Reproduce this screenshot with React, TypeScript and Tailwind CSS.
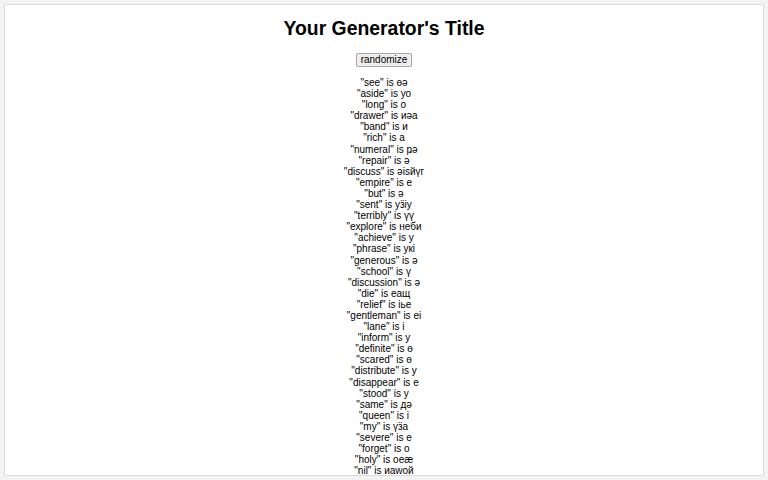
import React from "react";

const items: [string, string][] = [
  ["see", "өә"],
  ["aside", "уо"],
  ["long", "о"],
  ["drawer", "иәа"],
  ["band", "и"],
  ["rich", "a"],
  ["numeral", "ҏә"],
  ["repair", "ә"],
  ["discuss", "әisйүг"],
  ["empire", "е"],
  ["but", "ә"],
  ["sent", "уӟiу"],
  ["terribly", "үү"],
  ["explore", "нeби"],
  ["achieve", "у"],
  ["phrase", "укі"],
  ["generous", "ә"],
  ["school", "ү"],
  ["discussion", "ә"],
  ["die", "eaщ"],
  ["relief", "iье"],
  ["gentleman", "ei"],
  ["lane", "i"],
  ["inform", "у"],
  ["definite", "ө"],
  ["scared", "ө"],
  ["distribute", "у"],
  ["disappear", "е"],
  ["stood", "у"],
  ["same", "дә"],
  ["queen", "i"],
  ["my", "үӟа"],
  ["severe", "е"],
  ["forget", "о"],
  ["holy", "оеæ"],
  ["nil", "иawой"],
];

export default function App() {
  return (
    <div
      className="h-[480px] w-[768px] bg-[#f3f3f3] pt-[4px] pl-[4px] pr-[4px] pb-[4px]"
      style={{ fontFamily: '"Liberation Sans", Arial, sans-serif' }}
    >
      <div className="h-[472px] overflow-hidden border border-[#dcdcdc] bg-white">
        <div className="flex flex-col items-center">
          <h1 className="mt-[12px] text-[19.4px] font-bold leading-[23px] text-black">
            Your Generator's Title
          </h1>
          <button className="mt-[13px] rounded-[2px] border border-[#a9a9a9] bg-[#efefef] px-[4px] text-[10px] leading-[12px] text-black">
            randomize
          </button>
          <div className="mt-[10px] flex flex-col items-center text-[10px] leading-[11.09px] text-black">
            {items.map(([w, v], i) => (
              <div key={i}>
                "{w}" is {v}
              </div>
            ))}
          </div>
        </div>
      </div>
    </div>
  );
}
